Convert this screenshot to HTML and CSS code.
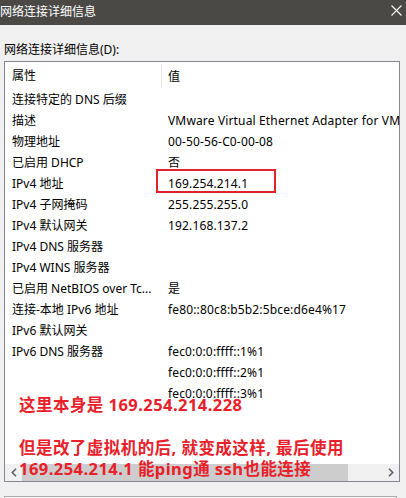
FILE: index.html
```html
<!DOCTYPE html>
<html lang="zh-CN">
<head>
<meta charset="utf-8">
<title>网络连接详细信息</title>
<link rel="stylesheet" href="styles.css">
</head>
<body>
<div class="window">
  <div class="titlebar">
    <span class="title">网络连接详细信息</span>
    <svg class="close" width="11" height="11" viewBox="0 0 11 11"><path d="M0.5 0.5 L10.5 10.5 M10.5 0.5 L0.5 10.5" stroke="#fff" stroke-width="1.1" fill="none"/></svg>
  </div>
  <div class="body">
    <div class="label">网络连接详细信息(D):</div>
    <div class="listbox">
      <div class="header">
        <div class="c1 hc1">属性</div>
        <div class="c2">值</div>
      </div>
      <div class="rows">
        <div class="row"><div class="c1">连接特定的 DNS 后缀</div><div class="c2"></div></div>
        <div class="row"><div class="c1">描述</div><div class="c2">VMware Virtual Ethernet Adapter for VMnet8</div></div>
        <div class="row"><div class="c1">物理地址</div><div class="c2">00-50-56-C0-00-08</div></div>
        <div class="row"><div class="c1">已启用 DHCP</div><div class="c2">否</div></div>
        <div class="row"><div class="c1">IPv4 地址</div><div class="c2 hl">169.254.214.1</div></div>
        <div class="row"><div class="c1">IPv4 子网掩码</div><div class="c2">255.255.255.0</div></div>
        <div class="row"><div class="c1">IPv4 默认网关</div><div class="c2">192.168.137.2</div></div>
        <div class="row"><div class="c1">IPv4 DNS 服务器</div><div class="c2"></div></div>
        <div class="row"><div class="c1">IPv4 WINS 服务器</div><div class="c2"></div></div>
        <div class="row"><div class="c1">已启用 NetBIOS over Tc...</div><div class="c2">是</div></div>
        <div class="row"><div class="c1">连接-本地 IPv6 地址</div><div class="c2">fe80::80c8:b5b2:5bce:d6e4%17</div></div>
        <div class="row"><div class="c1">IPv6 默认网关</div><div class="c2"></div></div>
        <div class="row"><div class="c1">IPv6 DNS 服务器</div><div class="c2">fec0:0:0:ffff::1%1</div></div>
        <div class="row"><div class="c1"></div><div class="c2">fec0:0:0:ffff::2%1</div></div>
        <div class="row"><div class="c1"></div><div class="c2">fec0:0:0:ffff::3%1</div></div>
      </div>
      <div class="hscroll">
        <div class="sbtn">
          <svg width="6" height="9" viewBox="0 0 6 9"><path d="M5 0.8 L1.3 4.5 L5 8.2" stroke="#606060" stroke-width="1.6" fill="none"/></svg>
        </div>
        <div class="track"><div class="thumb"></div></div>
        <div class="sbtn">
          <svg width="6" height="9" viewBox="0 0 6 9"><path d="M1 0.8 L4.7 4.5 L1 8.2" stroke="#606060" stroke-width="1.6" fill="none"/></svg>
        </div>
      </div>
      <div class="note">
        <p>这里本身是 169.254.214.228</p>
        <p class="gap">但是改了虚拟机的后, 就变成这样, 最后使用</p>
        <p>169.254.214.1 能ping通 ssh也能连接</p>
      </div>
    </div>
    <div class="nextbox"></div>
  </div>
</div>
</body>
</html>
```
FILE: styles.css
```css
html, body {
  margin: 0;
  padding: 0;
  overflow: hidden;
}
body {
  background: #f0f0f0;
  font-family: "Noto Sans", "Noto Sans CJK SC", sans-serif;
  font-size: 12px;
  color: #000;
}
.window {
  width: 406px;
  height: 498px;
  display: flex;
  flex-direction: column;
}
.titlebar {
  height: 25px;
  background: #4b4946;
  color: #fff;
  display: flex;
  align-items: center;
  justify-content: space-between;
  padding: 0 4px 2px 0;
  box-sizing: border-box;
  flex: none;
}
.title {
  font-size: 12px;
  line-height: 16px;
}
.close {
  display: block;
  margin-top: -2px;
}
.body {
  flex: 1;
  padding: 17px 6px 0 4px;
  display: flex;
  flex-direction: column;
}
.label {
  line-height: 16px;
  height: 19px;
}
.listbox {
  position: relative;
  height: 421px;
  box-sizing: border-box;
  border: 1px solid #828790;
  background: #fff;
  display: flex;
  flex-direction: column;
  overflow: hidden;
}
.header {
  height: 27px;
  display: flex;
  align-items: center;
  flex: none;
}
.c1 {
  width: 157px;
  box-sizing: border-box;
  padding-left: 7px;
  white-space: nowrap;
  overflow: hidden;
  flex: none;
}
.c2 {
  padding-left: 6px;
  white-space: nowrap;
  flex: none;
  letter-spacing: 0.15px;
}
.hc1 {
  height: 24px;
  line-height: 24px;
  border-right: 1px solid #e5e5e5;
}
.rows {
  flex: 1;
}
.row {
  height: 21px;
  line-height: 21px;
  display: flex;
}
.hl {
  position: relative;
}
.hl::after {
  content: "";
  position: absolute;
  left: -6px;
  top: -4px;
  width: 116px;
  height: 20px;
  border: 2px solid #e3212b;
}
.hscroll {
  height: 17px;
  display: flex;
  background: #f0f0f0;
  flex: none;
}
.sbtn {
  width: 17px;
  display: flex;
  align-items: center;
  justify-content: center;
  flex: none;
}
.track {
  flex: 1;
  display: flex;
  align-items: stretch;
}
.thumb {
  width: 326px;
  background: #cdcdcd;
}
.note {
  position: absolute;
  left: 14px;
  top: 332px;
  color: #e8202a;
  font-weight: 700;
  font-size: 16.5px;
  letter-spacing: 0.45px;
  line-height: 21px;
  white-space: nowrap;
}
.note p {
  margin: 0;
}
.note .gap {
  margin-top: 22px;
}
.nextbox {
  margin-top: 14px;
  margin-right: 3px;
  height: 20px;
  border: 1px solid #adadad;
  border-bottom: none;
}
```
